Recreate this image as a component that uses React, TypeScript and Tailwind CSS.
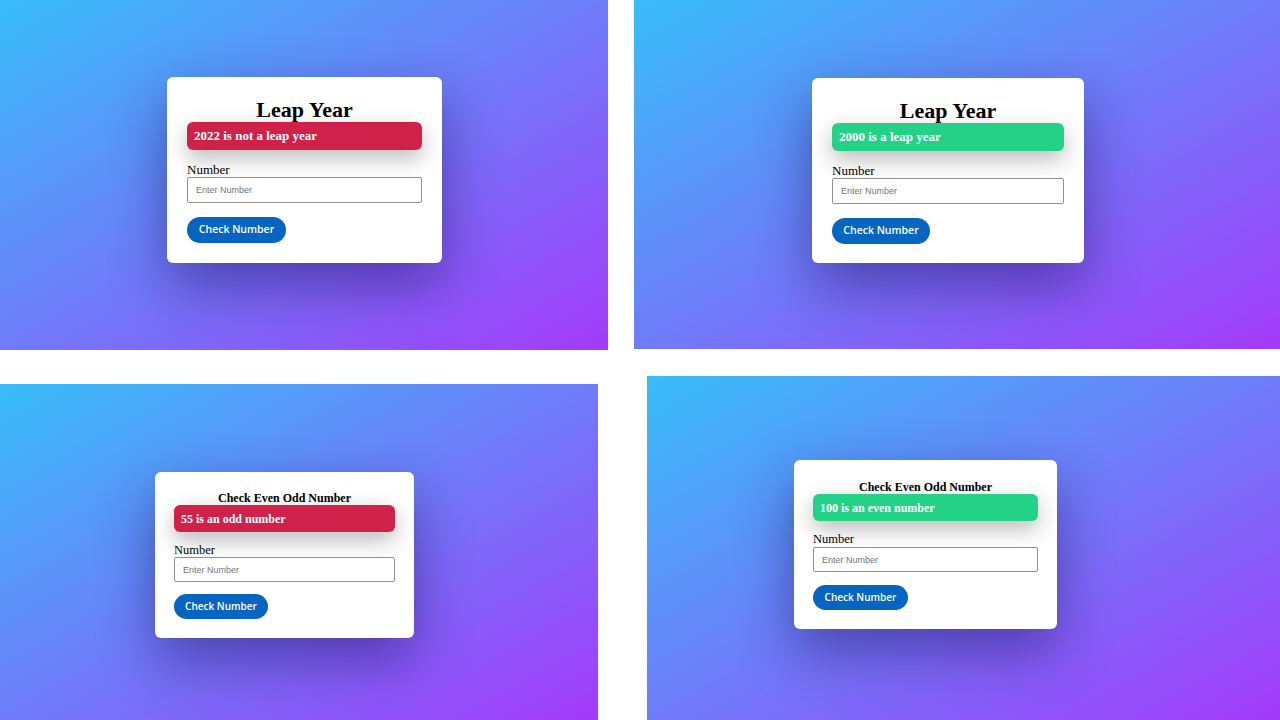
import React from "react";

type PanelProps = {
  panelCls: string;
  cardCls: string;
  title: string;
  titleCls: string;
  alertText: string;
  alertCls: string;
  labelCls: string;
  inputCls: string;
  buttonCls: string;
};

function Panel(p: PanelProps) {
  return (
    <div
      className={`absolute flex items-start bg-[linear-gradient(to_bottom_right,#38bef9,#6f7cf9,#a43af9)] ${p.panelCls}`}
    >
      <div
        className={`flex flex-col bg-white rounded-[6px] shadow-[0_22px_55px_rgba(25,5,80,0.45)] ${p.cardCls}`}
      >
        <h1
          className={`font-bold text-center text-black whitespace-nowrap font-['Liberation_Serif',serif] ${p.titleCls}`}
        >
          {p.title}
        </h1>
        <div
          className={`flex items-center rounded-[6px] text-white font-bold font-['Liberation_Serif',serif] shadow-[0_8px_22px_rgba(0,0,0,0.28)] pl-[7px] ${p.alertCls}`}
        >
          {p.alertText}
        </div>
        <label
          className={`block text-black font-['Liberation_Serif',serif] ${p.labelCls}`}
        >
          Number
        </label>
        <input
          type="text"
          placeholder="Enter Number"
          className={`w-full bg-white border border-[#909090] rounded-[2px] pl-[8px] text-[9px] font-['Liberation_Sans',sans-serif] placeholder:text-[#757575] outline-none ${p.inputCls}`}
        />
        <button
          className={`flex items-center justify-center rounded-full bg-[#0565c1] text-white font-semibold font-['Open_Sans',sans-serif] ${p.buttonCls}`}
        >
          Check Number
        </button>
      </div>
    </div>
  );
}

export default function App() {
  return (
    <div className="relative w-[1280px] h-[720px] bg-white overflow-hidden">
      <Panel
        panelCls="left-0 top-0 w-[608px] h-[350px] pl-[167px] pt-[77px]"
        cardCls="w-[275px] h-[186px] px-[20px] pt-[22px]"
        title="Leap Year"
        titleCls="text-[22px] leading-[22px] h-[22px]"
        alertText="2022 is not a leap year"
        alertCls="mt-[1px] h-[28px] text-[13px] bg-[#d0214b]"
        labelCls="mt-[12px] text-[13px] leading-[15px]"
        inputCls="h-[26px]"
        buttonCls="mt-[14px] h-[26px] w-[99px] text-[10.5px]"
      />
      <Panel
        panelCls="left-[634px] top-0 w-[646px] h-[349px] pl-[178px] pt-[78px]"
        cardCls="w-[272px] h-[185px] px-[20px] pt-[22px]"
        title="Leap Year"
        titleCls="text-[22px] leading-[22px] h-[22px]"
        alertText="2000 is a leap year"
        alertCls="mt-[1px] h-[28px] text-[13px] bg-[#23d286]"
        labelCls="mt-[12px] text-[13px] leading-[15px]"
        inputCls="h-[26px]"
        buttonCls="mt-[14px] h-[26px] w-[98px] text-[10.5px]"
      />
      <Panel
        panelCls="left-0 top-[384px] w-[598px] h-[336px] pl-[155px] pt-[88px]"
        cardCls="w-[259px] h-[166px] px-[19px] pt-[20px]"
        title="Check Even Odd Number"
        titleCls="text-[12px] leading-[12px] h-[12px]"
        alertText="55 is an odd number"
        alertCls="mt-[1px] h-[27px] text-[12px] bg-[#d0214b]"
        labelCls="mt-[11px] text-[12.5px] leading-[14px]"
        inputCls="h-[25px]"
        buttonCls="mt-[12px] h-[25px] w-[94px] text-[10px]"
      />
      <Panel
        panelCls="left-[647px] top-[376px] w-[633px] h-[344px] pl-[147px] pt-[84px]"
        cardCls="w-[263px] h-[169px] px-[19px] pt-[21px]"
        title="Check Even Odd Number"
        titleCls="text-[12px] leading-[12px] h-[12px]"
        alertText="100 is an even number"
        alertCls="mt-[1px] h-[27px] text-[12px] bg-[#23d286]"
        labelCls="mt-[11px] text-[12.5px] leading-[15px]"
        inputCls="h-[25px]"
        buttonCls="mt-[13px] h-[25px] w-[95px] text-[10px]"
      />
    </div>
  );
}
